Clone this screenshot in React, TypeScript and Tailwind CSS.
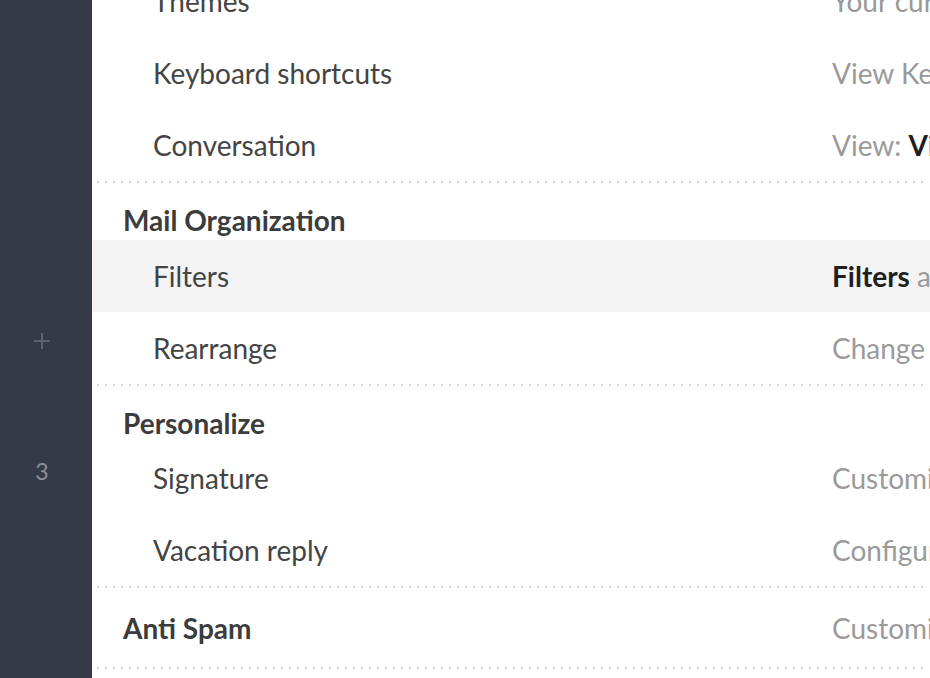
import React from "react";

const font = { fontFamily: "Lato, 'Open Sans', sans-serif" };

function Divider() {
  return (
    <div className="mx-[5px] h-[2px] bg-[linear-gradient(to_right,#d4d4d4_2px,transparent_2px)] bg-[length:8px_2px] bg-repeat-x" />
  );
}

function Row({
  label,
  desc,
  active = false,
}: {
  label: string;
  desc: React.ReactNode;
  active?: boolean;
}) {
  return (
    <div
      className={`flex h-[72px] items-center whitespace-nowrap text-[28px] leading-[34px] ${
        active ? "bg-[#f4f4f4]" : ""
      }`}
    >
      <div className="w-[740px] shrink-0 pl-[61px] text-[#444444]">{label}</div>
      <div className="text-[#9a9a9a]">{desc}</div>
    </div>
  );
}

function Header({ label, tall = true }: { label: string; tall?: boolean }) {
  return (
    <div
      className={`flex whitespace-nowrap pt-[20px] text-[28px] leading-[34px] ${
        tall ? "h-[57px]" : "h-[56px]"
      }`}
    >
      <div className="w-[740px] shrink-0 pl-[31px] font-bold text-[#3c3c3c]">{label}</div>
    </div>
  );
}

export default function App() {
  return (
    <div className="flex h-[678px] w-[930px] overflow-hidden bg-white" style={font}>
      <aside className="flex w-[92px] shrink-0 flex-col items-center bg-[#343a46] pr-[8px] pt-[332px]">
        <svg width="18" height="18" viewBox="0 0 18 18" className="block">
          <path d="M9 1v16M1 9h16" stroke="#5d636e" strokeWidth="2" />
        </svg>
        <div className="mt-[107px] text-[23px] leading-[28px] text-[#8b8f97]">3</div>
      </aside>
      <main className="min-w-0 flex-1 overflow-hidden">
        <div className="-mt-[35px]">
          <Row label="Themes" desc="Your current theme" />
          <Row label="Keyboard shortcuts" desc="View Keyboard shortcuts" />
          <Row
            label="Conversation"
            desc={
              <>
                View: <span className="font-bold text-[#1f1f1f]">Visible</span>
              </>
            }
          />
          <Divider />
          <Header label="Mail Organization" />
          <Row
            active
            label="Filters"
            desc={
              <>
                <span className="font-bold text-[#1f1f1f]">Filters</span> are rules
              </>
            }
          />
          <Row label="Rearrange" desc="Change the order" />
          <Divider />
          <Header label="Personalize" tall={false} />
          <Row label="Signature" desc="Customize signature" />
          <Row label="Vacation reply" desc="Configure vacation reply" />
          <Divider />
          <div className="flex h-[79px] whitespace-nowrap pt-[23px] text-[28px] leading-[34px]">
            <div className="w-[740px] shrink-0 pl-[31px] font-bold text-[#3c3c3c]">Anti Spam</div>
            <div className="text-[#9a9a9a]">Customize spam</div>
          </div>
          <Divider />
        </div>
      </main>
    </div>
  );
}
